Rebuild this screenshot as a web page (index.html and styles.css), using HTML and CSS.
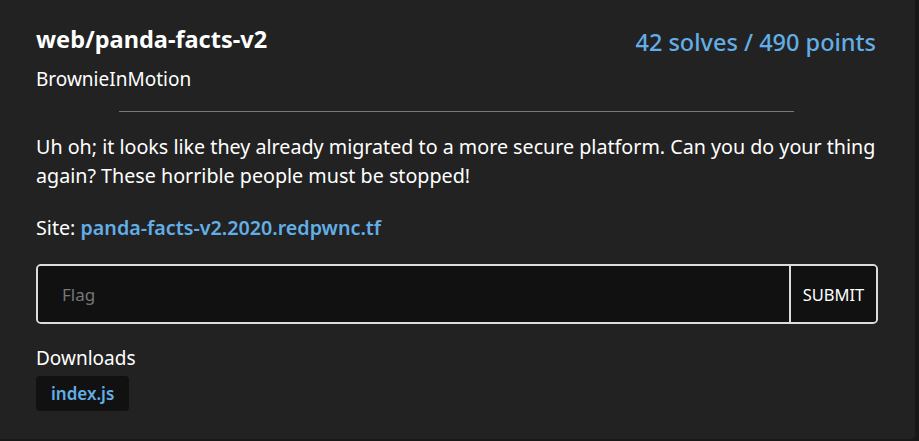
FILE: index.html
```html
<!DOCTYPE html>
<html lang="en">
<head>
<meta charset="utf-8">
<title>web/panda-facts-v2</title>
<link rel="stylesheet" href="styles.css">
</head>
<body>
<div class="card">
  <div class="head">
    <div class="titles">
      <h1 class="title">web/panda-facts-v2</h1>
      <div class="author">BrownieInMotion</div>
    </div>
    <div class="score">42 solves / 490 points</div>
  </div>
  <hr class="rule">
  <p class="desc">Uh oh; it looks like they already migrated to a more secure platform. Can you do your thing again? These horrible people must be stopped!</p>
  <p class="site">Site: <a class="link" href="#">panda-facts-v2.2020.redpwnc.tf</a></p>
  <form class="flag">
    <input class="flag-input" type="text" placeholder="Flag">
    <button class="flag-btn" type="button">SUBMIT</button>
  </form>
  <div class="dl-label">Downloads</div>
  <div class="dl-list"><a class="tag" href="#">index.js</a></div>
</div>
</body>
</html>
```
FILE: styles.css
```css
html, body {
  margin: 0;
  padding: 0;
  background: #181818;
}
body {
  font-family: "Noto Sans", "Open Sans", sans-serif;
  color: #fff;
}
.card {
  width: 915px;
  height: 439px;
  box-sizing: border-box;
  background: #222;
  border-bottom-right-radius: 4px;
  padding: 22px 39px 0 36px;
}
.head {
  display: flex;
  justify-content: space-between;
  align-items: flex-start;
}
.title {
  margin: 0;
  font-size: 23.5px;
  font-weight: 700;
  line-height: 34px;
}
.author {
  margin-top: 9px;
  font-size: 19px;
  line-height: 28px;
}
.score {
  margin-top: 3px;
  font-size: 23.5px;
  font-weight: 500;
  color: #62aee6;
  line-height: 34px;
}
.rule {
  width: 675px;
  margin: 18px auto 0;
  border: 0;
  border-top: 1px solid #777;
  height: 0;
}
.desc {
  margin: 20px 0 0;
  font-size: 19.7px;
  line-height: 29px;
}
.site {
  margin: 23px 0 0;
  font-size: 19.7px;
  line-height: 29px;
}
.link {
  color: #62aee6;
  font-weight: 600;
  text-decoration: none;
}
.flag {
  display: flex;
  margin: 22px -2px 0 0;
  height: 60px;
  box-sizing: border-box;
  border: 2px solid #ddd;
  border-radius: 5px;
  background: #111;
  overflow: hidden;
}
.flag-input {
  flex: 1;
  border: 0;
  background: #111;
  color: #fff;
  font-family: inherit;
  font-size: 17px;
  padding: 0 0 0 24px;
  outline: none;
}
.flag-input::placeholder {
  color: #777;
}
.flag-btn {
  border: 0;
  border-left: 2px solid #ddd;
  background: #111;
  color: #fff;
  font-family: inherit;
  font-size: 16.5px;
  padding: 0;
  width: 87px;
}
.dl-label {
  margin-top: 20px;
  font-size: 19px;
  line-height: 28px;
}
.dl-list {
  margin-top: 4px;
  display: flex;
}
.tag {
  display: inline-block;
  background: #111;
  color: #62aee6;
  font-weight: 600;
  font-size: 17px;
  line-height: 35px;
  padding: 0 15px;
  border-radius: 4px;
  text-decoration: none;
}
```
